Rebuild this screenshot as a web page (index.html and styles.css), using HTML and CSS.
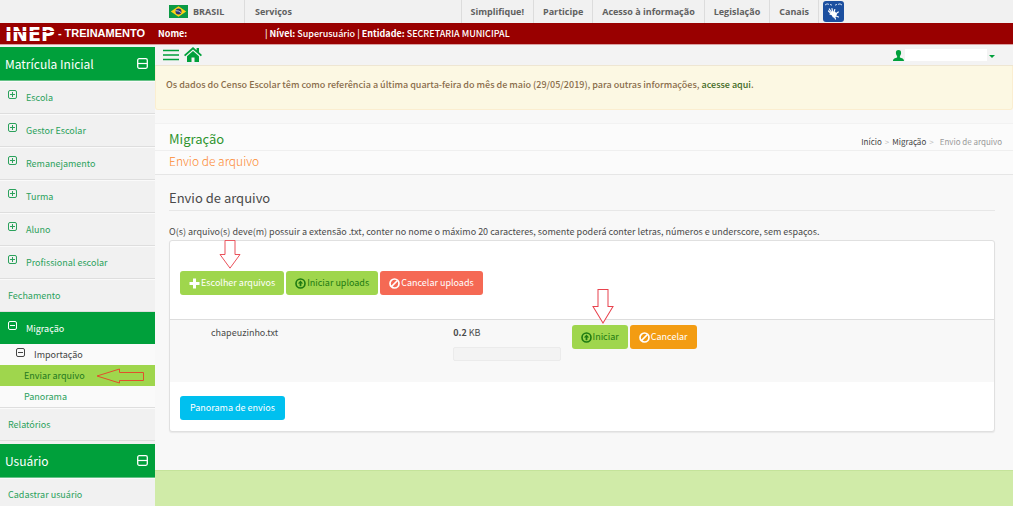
FILE: index.html
```html
<!DOCTYPE html>
<html lang="pt-BR">
<head>
<meta charset="utf-8">
<title>Envio de arquivo</title>
<link rel="stylesheet" href="styles.css">
</head>
<body>
<svg class="defs" aria-hidden="true">
  <symbol id="plus-box" viewBox="0 0 9 9"><rect x=".5" y=".5" width="8" height="8" rx="1.5" fill="none" stroke="currentColor"/><path d="M2 4.500h5M4.500 2v5" stroke="currentColor"/></symbol>
  <symbol id="minus-box" viewBox="0 0 9 9"><rect x=".5" y=".5" width="8" height="8" rx="1.500" fill="none" stroke="currentColor"/><path d="M2 4.500h5" stroke="currentColor"/></symbol>
  <symbol id="minus-large" viewBox="0 0 11 11"><rect x=".7" y=".7" width="9.600" height="9.600" rx="1.500" fill="none" stroke="currentColor" stroke-width="1.300"/><path d="M1 5.500h9" stroke="currentColor" stroke-width="1.200"/></symbol>
  <symbol id="upload" viewBox="0 0 11 11"><circle cx="5.500" cy="5.500" r="4.500" fill="none" stroke="currentColor" stroke-width="1.600"/><path d="M5.500 2.500 8.200 5.500H6.400V8.300H4.600V5.500H2.800z" fill="currentColor"/></symbol>
  <symbol id="ban" viewBox="0 0 11 11"><circle cx="5.500" cy="5.500" r="4.500" fill="none" stroke="currentColor" stroke-width="1.700"/><path d="M2.500 8.500 8.500 2.500" stroke="currentColor" stroke-width="1.700"/></symbol>
  <symbol id="arrow-down" viewBox="0 0 22 34" preserveAspectRatio="none"><path d="M6 .5h10V17h5L11 33 1 17h5z" fill="#fff" stroke="#e8434e"/></symbol>
</svg>
<div class="page">
  <nav class="govbar" aria-label="Governo">
    <a class="gov-brand" href="#">
      <svg class="flag" viewBox="0 0 19 13"><path fill="#0b9a45" d="M0 0h19v13H0z"/><path fill="#fcd116" d="M9.500 1.300 17.200 6.500 9.500 11.700 1.800 6.500z"/><circle cx="9.500" cy="6.500" r="3" fill="#2b3577"/><path d="M6.700 5.700q3-.3 5.400 1.900" fill="none" stroke="#fff" stroke-width=".7"/></svg>
      BRASIL</a>
    <a class="gov-services" href="#">Serviços</a>
    <div class="gov-links">
      <a href="#">Simplifique!</a><a href="#">Participe</a><a href="#">Acesso à informação</a><a href="#">Legislação</a><a href="#">Canais</a>
    </div>
    <a class="vlibras" href="#" aria-label="VLibras">
      <svg viewBox="0 0 21 21"><rect width="21" height="21" rx="3" fill="#1c4f9f"/><path d="M2 4q2-2 4-.6M7 3.400l2 .8M12 4.200l2-.8M15 3.400q2-1.400 4 .6" fill="none" stroke="#dce8f8" stroke-width=".9"/><path d="M7.500 12 5.500 10M8 10.500 6.300 8M9.500 10.500 9 7.500M11 11l.8-2.500M12.500 13l2.800-2M13 15l2.500 1M11.500 16l1 2M9 13.500l-2-.3" stroke="#fff" stroke-width="1.200" stroke-linecap="round"/><path d="M8 10.500h4l2 2.500-1.500 3.500H10L7.800 13z" fill="#fff"/></svg>
    </a>
  </nav>
  <header class="masthead">
    <div class="brand">
      <span class="logo">INEP</span>
      <span>- TREINAMENTO</span>
    </div>
    <p class="session"><span class="session-name"><b>Nome:</b></span><span>| <b>Nível:</b> Superusuário | <b>Entidade:</b> SECRETARIA MUNICIPAL</span></p>
  </header>
  <div class="layout">
    <aside class="sidebar">
      <h2 class="side-title">Matrícula Inicial <svg><use href="#minus-large"/></svg></h2>
      <ul class="menu">
        <li><a href="#"><svg><use href="#plus-box"/></svg>Escola</a></li>
        <li><a href="#"><svg><use href="#plus-box"/></svg>Gestor Escolar</a></li>
        <li><a href="#"><svg><use href="#plus-box"/></svg>Remanejamento</a></li>
        <li><a href="#"><svg><use href="#plus-box"/></svg>Turma</a></li>
        <li><a href="#"><svg><use href="#plus-box"/></svg>Aluno</a></li>
        <li><a href="#"><svg><use href="#plus-box"/></svg>Profissional escolar</a></li>
        <li><a href="#">Fechamento</a></li>
        <li class="open"><a href="#"><svg><use href="#minus-box"/></svg>Migração</a>
          <ul class="submenu">
            <li><a class="group" href="#"><svg><use href="#minus-box"/></svg>Importação</a></li>
            <li><a class="current" href="#">Enviar arquivo
              <svg class="pointer-left" viewBox="0 0 48 16"><path d="M1 8 23.500 1v3.500h24v8h-24V15z" fill="none" stroke="#e0502c"/></svg></a></li>
            <li><a href="#">Panorama</a></li>
          </ul>
        </li>
        <li><a href="#">Relatórios</a></li>
      </ul>
      <h2 class="side-title second">Usuário <svg><use href="#minus-large"/></svg></h2>
      <ul class="menu"><li><a href="#">Cadastrar usuário</a></li></ul>
    </aside>
    <main class="main">
      <div class="toolbar">
        <button class="icon-btn" aria-label="Menu"><svg width="16" height="12" viewBox="0 0 16 12"><path d="M0 1.500h16M0 6h16M0 10.500h16" stroke="#00a03b" stroke-width="1.400"/></svg></button>
        <a class="home" href="#" aria-label="Página inicial"><svg width="18" height="16" viewBox="0 0 18 16"><path d="M9 0 0 8l1.200 1.300L9 2.600l7.800 6.700L18 8l-3-2.700V1h-2.400v2.200z" fill="#00a03b"/><path d="M9 4.100 3 9.200V15h4.500v-4.500h3V15H15V9.200z" fill="#00a03b"/></svg></a>
        <button class="user" aria-label="Usuário"><svg width="11" height="11" viewBox="0 0 11 11"><path d="M5.500 0C7.400 0 8.200 1.300 8.100 3 8 4.500 7.500 5.400 6.900 6v1.400c1.800.7 4.100.9 4.100 3.600H0c0-2.700 2.300-2.900 4.100-3.600V6C3.500 5.400 3 4.500 2.900 3 2.800 1.300 3.600 0 5.500 0z" fill="#00a03b"/></svg><span class="user-name"></span><span class="caret"></span></button>
      </div>
      <p class="alert">Os dados do Censo Escolar têm como referência a última quarta-feira do mês de maio (29/05/2019), para outras informações, <a href="#">acesse aqui</a>.</p>
      <header class="page-head">
        <div class="head-row"><h1>Migração</h1>
          <nav class="crumbs" aria-label="Caminho"><a href="#">Início</a><i>&gt;</i><a href="#">Migração</a><i>&gt;</i><span>Envio de arquivo</span></nav></div>
        <p class="subtitle">Envio de arquivo</p>
      </header>
      <section class="content">
        <h2>Envio de arquivo</h2>
        <p class="hint">O(s) arquivo(s) deve(m) possuir a extensão .txt, conter no nome o máximo 20 caracteres, somente poderá conter letras, números e underscore, sem espaços.</p>
        <div class="panel">
          <div class="actions">
            <button class="btn lime white"><svg viewBox="0 0 11 11"><path d="M4 .5h3V4h3.500v3H7v3.500H4V7H.5V4H4z" fill="currentColor"/></svg>Escolher arquivos</button>
            <button class="btn lime"><svg><use href="#upload"/></svg>Iniciar uploads</button>
            <button class="btn red"><svg><use href="#ban"/></svg>Cancelar uploads</button>
            <svg class="pointer-down choose"><use href="#arrow-down"/></svg>
          </div>
          <table class="files">
            <tr>
              <td class="name">chapeuzinho.txt</td>
              <td class="size"><b>0.2</b> KB<div class="progress" role="progressbar" aria-label="Progresso"></div></td>
              <td class="ops"><div class="row-actions">
                <button class="btn lime"><svg><use href="#upload"/></svg>Iniciar</button>
                <button class="btn orange"><svg><use href="#ban"/></svg>Cancelar</button>
                <svg class="pointer-down start"><use href="#arrow-down"/></svg>
              </div></td>
            </tr>
          </table>
          <div class="panel-foot"><button class="btn blue">Panorama de envios</button></div>
        </div>
      </section>
      <footer class="footer"></footer>
    </main>
  </div>
</div>
</body>
</html>
```
FILE: styles.css
```css
* { box-sizing: border-box; }
html, body { height: 100%; }
body { margin: 0; background: #fff; color: #4a4a4a; font: 9px/16px "Noto Sans CJK SC", "Open Sans", sans-serif; overflow: hidden; }
h1, h2, p, ul { margin: 0; padding: 0; font-weight: 400; }
ul { list-style: none; }
a { color: inherit; text-decoration: none; }
button { border: 0; padding: 0; background: none; font: inherit; color: inherit; cursor: pointer; }
b { font-weight: 700; }
.defs { display: none; }
.page { display: flex; flex-direction: column; min-height: 100vh; margin-right: 11px; background: #f1f1f1; }

.govbar { display: flex; height: 23px; padding-left: 169px; background: #f1f1f1; color: #606060; font: 700 9px/23px "Open Sans", sans-serif; }
.gov-brand { display: flex; align-items: center; gap: 5px; width: 76px; border-right: 1px solid #dcdcdc; }
.flag { width: 19px; height: 13px; }
.gov-services { padding-left: 10px; }
.gov-links { display: flex; margin-left: auto; }
.gov-links a { padding: 0 9px; border-left: 1px solid #dcdcdc; }
.gov-links a:last-child { border-right: 1px solid #dcdcdc; }
.vlibras { margin: 1px 169px 0 4px; }
.vlibras svg { display: block; width: 21px; height: 21px; }

.masthead { display: flex; height: 22px; background: #900; color: #fff; border-bottom: 1px solid #d9a0a0; }
.brand { display: flex; align-items: center; gap: 3px; width: 158px; padding-left: 5px; font: 700 11px/21px "Liberation Sans", sans-serif; }
.logo { position: relative; font: 700 19px/21px "DejaVu Sans", sans-serif; padding-top: 2px; }
.logo::after { content: ""; position: absolute; left: 0; right: 0; top: 9px; height: 1px; background: #900; }
.session { display: flex; line-height: 22px; font-weight: 500; }
.session-name { width: 107px; }

.layout { display: flex; flex: 1; }
.sidebar { width: 155px; flex: none; padding-top: 2px; background: #f1f1f1; color: #2ba15c; }
.side-title { display: flex; align-items: center; justify-content: space-between; height: 34px; padding: 0 7px 0 5px; background: #00a03b; border-bottom: 1px solid #65c287; color: #fff; font-size: 12px; line-height: 20px; }
.side-title svg { width: 11px; height: 11px; }
.side-title.second { margin-top: 3px; }
.menu > li > a { display: flex; align-items: center; gap: 9px; height: 33px; padding: 1px 0 0 8px; border-bottom: 1px solid #dedede; box-shadow: inset 0 1px #fafafa; }
.menu > li > a svg { width: 9px; height: 9px; margin-bottom: 6px; }
.menu > .open > a { height: 32px; background: #00a03b; color: #fff; border: 0; box-shadow: none; }
.submenu { background: #fafafa; border-bottom: 1px solid #dedede; }
.submenu a { position: relative; display: flex; align-items: center; height: 21px; padding-left: 24px; }
.submenu .group { gap: 9px; padding-left: 16px; color: #444; }
.submenu .group svg { width: 9px; height: 9px; margin-bottom: 5px; }
.submenu .current { background: #9fd64d; color: #23791f; }
.pointer-left { position: absolute; left: 96px; top: 3px; width: 48px; height: 16px; }

.main { flex: 1; display: flex; flex-direction: column; min-width: 0; background: #f8f8f8; }
.toolbar { display: flex; align-items: center; gap: 5px; height: 21px; padding: 0 18px 0 8px; background: #f3f3f3; border-bottom: 1px solid #eee6d2; }
.icon-btn, .home, .icon-btn svg, .home svg { display: block; }
.user { display: flex; align-items: center; margin-left: auto; }
.user-name { width: 82px; height: 12px; margin: 0 2px 0 1px; background: #fff; }
.caret { border: 3px solid transparent; border-top-color: #00a03b; border-bottom: 0; margin-top: 3px; }
.alert { height: 44px; padding: 11px 10px; background: #fcf8e3; border: 1px solid #fbeed0; border-top: 0; border-radius: 0 0 3px 3px; color: #8a6d4b; font-weight: 500; }
.alert a { color: #3f6a1e; }
.page-head { margin-top: 13px; background: #fbfbfb; border-top: 1px solid #f2f2f2; border-bottom: 1px solid #e6e6e6; }
.head-row { display: flex; justify-content: space-between; align-items: center; height: 27px; padding: 4px 11px 0 14px; border-bottom: 1px solid #efefef; }
h1 { color: #2e942e; font-size: 13px; }
.subtitle { padding: 0 14px 4px; color: #fb8a30; font-size: 12px; line-height: 19px; font-weight: 300; }
.crumbs { display: flex; gap: 3px; font-size: 8px; color: #444; padding-top: 5px; }
.crumbs i { font-style: normal; color: #bbb; }
.crumbs span { color: #999; padding-left: 3px; }
.content { padding: 12px 18px 38px 14px; }
.content h2 { padding-bottom: 1px; border-bottom: 1px solid #e7e7e7; font-size: 13px; line-height: 22px; }
.hint { padding-top: 13px; }
.panel { background: #fff; border: 1px solid #e0e0e0; border-radius: 3px; box-shadow: 0 1px 1px #e8e8e8; }
.actions { position: relative; display: flex; gap: 2px; padding: 30px 10px 24px; }
.btn { display: flex; align-items: center; gap: 1px; height: 24px; padding: 0 9px; border-radius: 3px; color: #fff; white-space: nowrap; }
.btn svg { width: 11px; height: 11px; }
.lime { background: #9fd64d; color: #1e7a12; }
.lime.white { color: #fff; }
.red { background: #f56954; }
.orange { background: #f39c12; }
.blue { background: #00c0ef; padding: 0 10px; }
.pointer-down { position: absolute; width: 22px; height: 29px; }
.pointer-down.choose { left: 49px; top: -1px; }
.pointer-down.start { left: 20px; top: -36px; height: 35px; }
.files { width: 100%; border-collapse: collapse; table-layout: fixed; background: #f8f8f8; }
.files td { height: 62px; padding: 5px 0 0; border-top: 1px solid #ddd; vertical-align: top; }
.files .name { width: 34%; padding-left: 41px; }
.files .size { width: 14%; padding-left: 3px; }
.files .ops { padding-left: 6px; }
.progress { width: 108px; height: 14px; margin-top: 6px; background: #f3f3f3; border: 1px solid #ebebeb; border-radius: 2px; }
.row-actions { position: relative; display: flex; gap: 2px; }
.panel-foot { padding: 14px 10px 11px; }
.footer { flex: 1; background: #d0eba8; border-top: 1px solid #c4e39a; }
```
